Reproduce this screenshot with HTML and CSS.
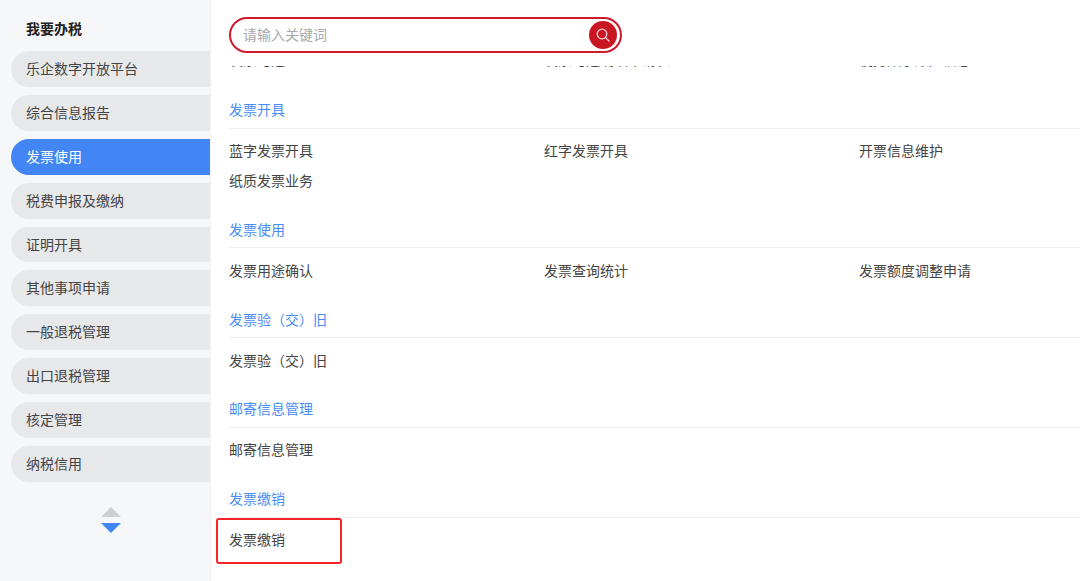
FILE: index.html
```html
<!DOCTYPE html>
<html lang="zh-CN">
<head>
<meta charset="utf-8">
<title>我要办税</title>
<link rel="stylesheet" href="styles.css">
</head>
<body>
<div class="page">
  <aside class="sidebar">
    <h2 class="side-title">我要办税</h2>
    <nav class="side-nav">
      <a class="side-item">乐企数字开放平台</a>
      <a class="side-item">综合信息报告</a>
      <a class="side-item active">发票使用</a>
      <a class="side-item">税费申报及缴纳</a>
      <a class="side-item">证明开具</a>
      <a class="side-item">其他事项申请</a>
      <a class="side-item">一般退税管理</a>
      <a class="side-item">出口退税管理</a>
      <a class="side-item">核定管理</a>
      <a class="side-item">纳税信用</a>
    </nav>
    <div class="pager">
      <span class="tri tri-up"></span>
      <span class="tri tri-down"></span>
    </div>
  </aside>
  <main class="main">
    <header class="search-bar">
      <div class="search">
        <span class="search-text">请输入关键词</span>
        <span class="search-btn">
          <svg width="16" height="16" viewBox="0 0 16 16" fill="none" stroke="#f6d5d8" stroke-width="1.3" stroke-linecap="round"><circle cx="7" cy="7" r="4.8"/><path d="M10.6 10.6 14 14"/></svg>
        </span>
      </div>
    </header>
    <div class="scroller">
      <div class="scroll-content">
        <div class="rows top-row">
          <a class="row">发票勾选</a><a class="row">发票勾选确认申请表</a><a class="row">税务数字账户信息</a>
        </div>
        <section class="group">
          <h3 class="group-title">发票开具</h3>
          <div class="rows">
            <a class="row">蓝字发票开具</a><a class="row">红字发票开具</a><a class="row">开票信息维护</a>
            <a class="row">纸质发票业务</a>
          </div>
        </section>
        <section class="group">
          <h3 class="group-title">发票使用</h3>
          <div class="rows">
            <a class="row">发票用途确认</a><a class="row">发票查询统计</a><a class="row">发票额度调整申请</a>
          </div>
        </section>
        <section class="group">
          <h3 class="group-title">发票验（交）旧</h3>
          <div class="rows"><a class="row">发票验（交）旧</a></div>
        </section>
        <section class="group">
          <h3 class="group-title">邮寄信息管理</h3>
          <div class="rows"><a class="row">邮寄信息管理</a></div>
        </section>
        <section class="group">
          <h3 class="group-title">发票缴销</h3>
          <div class="rows"><a class="row marked">发票缴销</a></div>
        </section>
      </div>
    </div>
  </main>
</div>
</body>
</html>
```
FILE: styles.css
```css
* { box-sizing: border-box; }
html, body { margin: 0; height: 100%; overflow: hidden; background: #fff; }
body { font-family: "Noto Sans CJK SC", "Noto Sans", sans-serif; font-size: 14px; color: #444; }
.page { display: flex; width: 1080px; height: 581px; }

.sidebar { width: 211px; flex: none; background: #f6f7f9; border-right: 1px solid #f1f1f2; padding: 18px 0 0 11px; display: flex; flex-direction: column; }
.side-title { margin: 0 0 13px 15px; height: 20px; font-size: 14px; line-height: 20px; font-weight: 700; color: #222; }
.side-nav { display: flex; flex-direction: column; gap: 8px; }
.side-item { height: 35.9px; line-height: 34px; padding-left: 15px; background: #e7e8ea; border-radius: 18px 0 0 18px; color: #444; }
.side-item.active { background: #4285f4; color: #fff; }
.pager { display: flex; flex-direction: column; align-items: center; gap: 6px; width: 199px; margin-top: 25px; }
.tri { width: 0; height: 0; border-left: 10px solid transparent; border-right: 10px solid transparent; }
.tri-up { border-bottom: 10px solid #cfcfcf; }
.tri-down { border-top: 10px solid #4285f4; }

.main { flex: 1; min-width: 0; display: flex; flex-direction: column; padding-left: 18px; }
.search-bar { height: 66px; flex: none; padding-top: 17px; }
.search { width: 393px; height: 36px; border: 2px solid #cf1a2b; border-radius: 18px; display: flex; align-items: center; justify-content: space-between; padding: 0 3px 0 12px; }
.search-text { color: #a9a9a9; padding-bottom: 2px; }
.search-btn { width: 28px; height: 28px; border-radius: 50%; background: #c81623; display: flex; align-items: center; justify-content: center; }

.scroller { flex: 1; overflow: hidden; margin-left: -18px; padding-left: 18px; }
.scroll-content { margin-top: -29px; }
.top-row { margin-bottom: 18.5px; }
.group { margin-bottom: 16.8px; }
.group-title { margin: 0; height: 36.5px; line-height: 35px; font-size: 14px; font-weight: 400; color: #4a8cf5; border-bottom: 1px solid #eee; }
.rows { display: grid; grid-template-columns: repeat(3, 315px); padding-top: 6.5px; }
.row { height: 30px; line-height: 30px; position: relative; }
.marked::after { content: ""; box-sizing: border-box; position: absolute; left: -13px; top: -6px; width: 126px; height: 46px; border: 2.5px solid #f5242a; border-radius: 3px; }
```
